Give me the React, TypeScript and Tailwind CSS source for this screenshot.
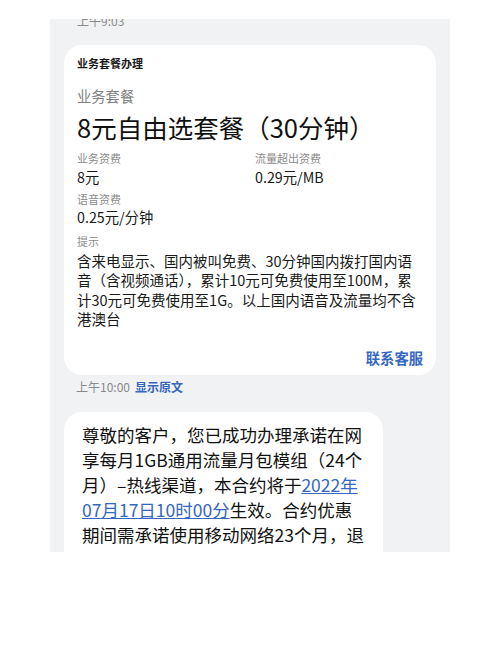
import React from "react";

const font = { fontFamily: '"Noto Sans CJK SC", "Noto Sans", sans-serif' };

export default function App() {
  return (
    <div className="w-[500px] h-[666px] bg-white overflow-hidden" style={font}>
      <div className="ml-[50px] mt-[19px] w-[400px] h-[533px] bg-[#f1f2f4] overflow-hidden flex flex-col">
        <div className="ml-[27px] -mt-[6px] text-[12px] leading-[16px] text-[#8a8a8a]">上午9:03</div>
        <div className="ml-[14px] mt-[16px] w-[372px] bg-white rounded-[18px] pl-[13px] pr-[13px] pt-[8px] pb-[7px] flex flex-col">
          <div className="text-[11px] leading-[20px] font-bold text-[#1a1a1a]">业务套餐办理</div>
          <div className="mt-[12px] text-[14.3px] leading-[22px] text-[#808080]">业务套餐</div>
          <div className="mt-[3px] text-[25.5px] leading-[34px] text-[#111] whitespace-nowrap">8元自由选套餐（30分钟）</div>
          <div className="mt-[6px] grid grid-cols-[178px_1fr]">
            <div className="flex flex-col">
              <div className="text-[11px] leading-[16px] text-[#8a8a8a]">业务资费</div>
              <div className="mt-[1px] text-[14.3px] leading-[20px] text-[#1a1a1a]">8元</div>
            </div>
            <div className="flex flex-col">
              <div className="text-[11px] leading-[16px] text-[#8a8a8a]">流量超出资费</div>
              <div className="mt-[1px] text-[14.3px] leading-[20px] text-[#1a1a1a]">0.29元/MB</div>
            </div>
          </div>
          <div className="mt-[4px] text-[11px] leading-[16px] text-[#8a8a8a]">语音资费</div>
          <div className="text-[14.3px] leading-[20px] text-[#1a1a1a]">0.25元/分钟</div>
          <div className="mt-[6px] text-[11px] leading-[16px] text-[#8a8a8a]">提示</div>
          <div className="mt-[2px] text-[14.5px] leading-[19.3px] text-[#1a1a1a] whitespace-nowrap">
            <div>含来电显示、国内被叫免费、30分钟国内拨打国内语</div>
            <div>音（含视频通话），累计10元可免费使用至100M，累</div>
            <div>计30元可免费使用至1G。以上国内语音及流量均不含</div>
            <div>港澳台</div>
          </div>
          <div className="mt-[19.5px] flex justify-end text-[14.3px] leading-[20px] font-bold text-[#3566c0]">联系客服</div>
        </div>
        <div className="ml-[26px] mt-[4px] flex gap-[5px] text-[12px] leading-[16px]">
          <span className="text-[#8a8a8a]">上午10:00</span>
          <span className="text-[#3566c0] font-bold">显示原文</span>
        </div>
        <div className="ml-[14px] mt-[17px] w-[319px] flex-1 bg-white rounded-t-[18px] pl-[18px] pt-[10px] text-[17.5px] leading-[25px] text-[#111] whitespace-nowrap">
          <div>尊敬的客户，您已成功办理承诺在网</div>
          <div>享每月1GB通用流量月包模组（24个</div>
          <div>
            月）–热线渠道，本合约将于<span className="text-[#3566c0] underline">2022年</span>
          </div>
          <div>
            <span className="text-[#3566c0] underline">07月17日10时00分</span>生效。合约优惠
          </div>
          <div>期间需承诺使用移动网络23个月，退</div>
        </div>
      </div>
    </div>
  );
}
